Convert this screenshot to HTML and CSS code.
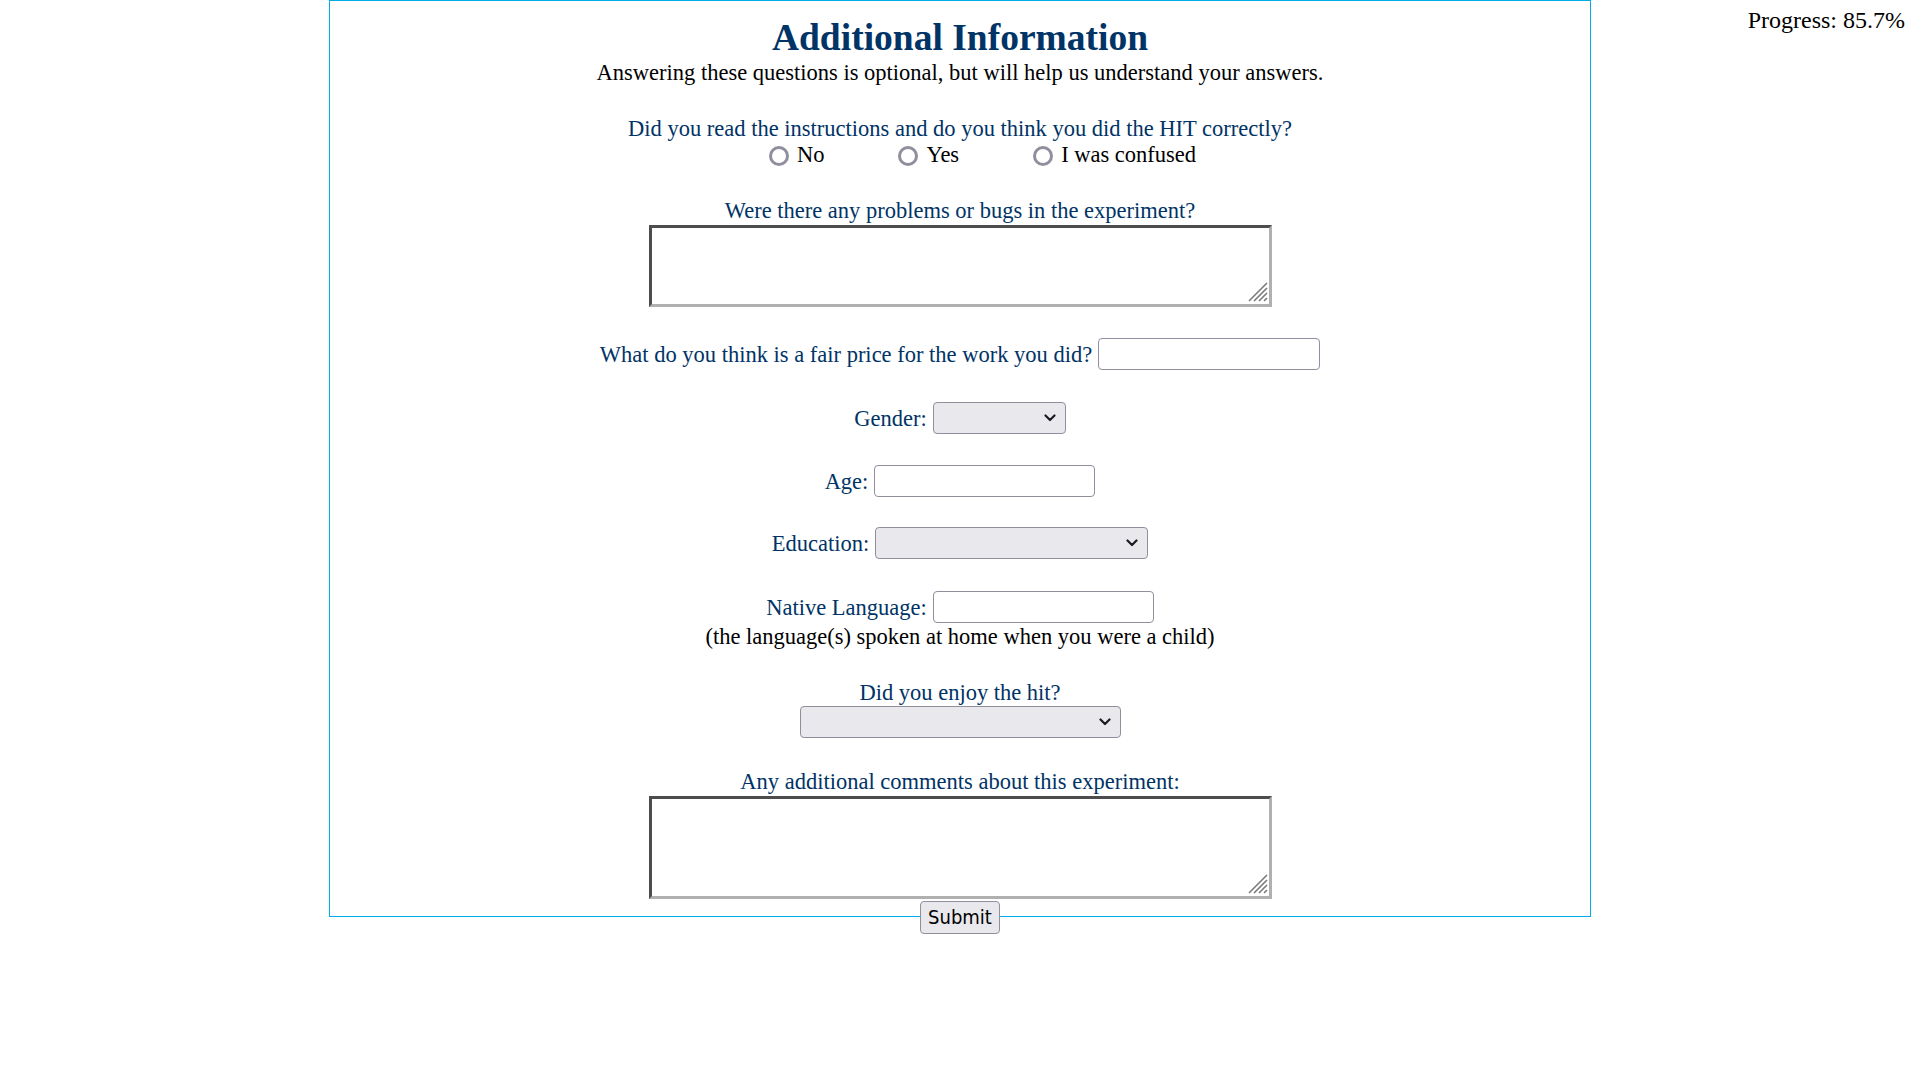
FILE: index.html
```html
<!DOCTYPE html>
<html lang="en">
<head>
<meta charset="utf-8">
<title>Additional Information</title>
<link rel="stylesheet" href="styles.css">
</head>
<body>
<div class="progress">Progress: 85.7%</div>
<form class="panel">
  <h1 class="title">Additional Information</h1>
  <p class="intro">Answering these questions is optional, but will help us understand your answers.</p>

  <p class="q q-first">Did you read the instructions and do you think you did the HIT correctly?</p>
  <div class="options">
    <label class="opt"><input class="radio" type="radio" name="correct" value="no"><span>No</span></label>
    <label class="opt"><input class="radio" type="radio" name="correct" value="yes"><span>Yes</span></label>
    <label class="opt"><input class="radio" type="radio" name="correct" value="confused"><span>I was confused</span></label>
  </div>

  <p class="q q-bugs">Were there any problems or bugs in the experiment?</p>
  <div class="area area-short">
    <textarea class="textarea" name="bugs"></textarea>
    <svg class="grip" width="20" height="20" viewBox="0 0 20 20"><path d="M1 19L19 1M6 19L19 6M11 19L19 11M16 19L19 16"/></svg>
  </div>

  <div class="field f-price">
    <label class="label">What do you think is a fair price for the work you did?</label>
    <input class="text" type="text" name="price">
  </div>

  <div class="field f-gender">
    <label class="label">Gender:</label>
    <span class="sel sel-gender">
      <select class="select" name="gender"><option></option></select>
      <svg class="chev" width="12" height="8" viewBox="0 0 12 8"><path d="M1.5 1.5L6 6L10.5 1.5"/></svg>
    </span>
  </div>

  <div class="field f-age">
    <label class="label">Age:</label>
    <input class="text" type="text" name="age">
  </div>

  <div class="field f-edu">
    <label class="label">Education:</label>
    <span class="sel sel-edu">
      <select class="select" name="education"><option></option></select>
      <svg class="chev" width="12" height="8" viewBox="0 0 12 8"><path d="M1.5 1.5L6 6L10.5 1.5"/></svg>
    </span>
  </div>

  <div class="field f-lang">
    <label class="label">Native Language:</label>
    <input class="text" type="text" name="language">
  </div>
  <p class="note">(the language(s) spoken at home when you were a child)</p>

  <p class="q q-enjoy">Did you enjoy the hit?</p>
  <span class="sel sel-enjoy">
    <select class="select" name="enjoy"><option></option></select>
    <svg class="chev" width="12" height="8" viewBox="0 0 12 8"><path d="M1.5 1.5L6 6L10.5 1.5"/></svg>
  </span>

  <p class="q q-comments">Any additional comments about this experiment:</p>
  <div class="area area-tall">
    <textarea class="textarea" name="comments"></textarea>
    <svg class="grip" width="20" height="20" viewBox="0 0 20 20"><path d="M1 19L19 1M6 19L19 6M11 19L19 11M16 19L19 16"/></svg>
  </div>

  <div class="actions">
    <button class="submit" type="button">Submit</button>
  </div>
</form>
</body>
</html>
```

FILE: styles.css
```css
html, body {
  margin: 0;
  padding: 0;
  background: #ffffff;
}

body {
  min-height: 100vh;
  font-family: "Liberation Serif", "Times New Roman", serif;
  color: #000000;
}

.progress {
  position: absolute;
  top: 6px;
  right: 15px;
  font-size: 24px;
  line-height: 28px;
}

.panel {
  width: 1260px;
  margin: 0 auto;
  border: 1px solid #00ade6;
  text-align: center;
}

.title {
  margin: 15px 0 0;
  font-size: 37.5px;
  line-height: 44px;
  font-weight: bold;
  color: #003366;
}

.intro,
.q,
.note {
  margin: 0;
  font-size: 22.5px;
  line-height: 26px;
}

.q {
  color: #003366;
}

.q-first { margin-top: 30px; }
.q-bugs { margin-top: 30px; }
.note { margin-top: 1px; }
.q-enjoy { margin-top: 30px; }
.q-comments { margin-top: 31px; }

.options {
  display: flex;
  justify-content: center;
  align-items: center;
  gap: 74px;
  height: 26px;
  padding-left: 45px;
  font-size: 22.5px;
  line-height: 26px;
}

.opt {
  display: flex;
  align-items: center;
  gap: 8px;
}

.radio {
  appearance: none;
  -webkit-appearance: none;
  box-sizing: border-box;
  width: 20px;
  height: 20px;
  margin: 2px 0 0;
  border: 3px solid #8f8f9d;
  border-radius: 50%;
  background: #ffffff;
}

.area {
  position: relative;
  width: 623px;
  margin: 1px auto 0;
}

.area-short { height: 82px; }
.area-tall { height: 103px; margin-top: 1.5px; }

.textarea {
  display: block;
  box-sizing: border-box;
  width: 100%;
  height: 100%;
  margin: 0;
  padding: 2px;
  border-width: 3px;
  border-style: solid;
  border-color: #4d4d4d #b0b0b0 #b0b0b0 #4d4d4d;
  background: #ffffff;
  resize: none;
  font-family: "Liberation Mono", monospace;
}

.grip {
  position: absolute;
  right: 4px;
  bottom: 5px;
  pointer-events: none;
  fill: none;
  stroke: #7a7a7a;
  stroke-width: 1.6;
}

.field {
  display: flex;
  justify-content: center;
  align-items: flex-start;
  gap: 6px;
  height: 32px;
}

.f-price { margin-top: 31px; }
.f-gender { margin-top: 32px; }
.f-age { margin-top: 31px; }
.f-edu { margin-top: 30px; }
.f-lang { margin-top: 32px; }

.label {
  margin-top: 3.5px;
  font-size: 22.5px;
  line-height: 26px;
  color: #003366;
}

.text {
  box-sizing: border-box;
  width: 221px;
  height: 32px;
  margin: 0;
  padding: 0 4px;
  border: 1px solid #8f8f9d;
  border-radius: 4px;
  background: #ffffff;
  font-family: "DejaVu Sans", sans-serif;
  font-size: 18px;
}

.f-price .text { width: 222px; }

.sel {
  position: relative;
  display: inline-block;
  height: 32px;
}

.sel-gender { width: 133px; }
.sel-edu { width: 273px; }
.sel-enjoy {
  display: block;
  width: 321px;
  margin: -0.5px auto 0;
}

.select {
  appearance: none;
  -webkit-appearance: none;
  box-sizing: border-box;
  display: block;
  width: 100%;
  height: 32px;
  margin: 0;
  padding: 0 30px 0 8px;
  border: 1px solid #8f8f9d;
  border-radius: 4px;
  background: #e9e9ed;
  font-family: "DejaVu Sans", sans-serif;
  font-size: 18px;
  color: #000000;
}

.chev {
  position: absolute;
  right: 10px;
  top: 12px;
  pointer-events: none;
  fill: none;
  stroke: #1c1b22;
  stroke-width: 2.2;
  stroke-linecap: round;
  stroke-linejoin: round;
}

.actions {
  display: flex;
  justify-content: center;
  height: 33px;
  margin: 2px 0 -18px;
}

.submit {
  box-sizing: border-box;
  width: 80px;
  height: 33px;
  margin: 0;
  padding: 0;
  border: 1px solid #8f8f9d;
  border-radius: 4px;
  background: #e9e9ed;
  color: #000000;
  font-family: "DejaVu Sans Condensed", "DejaVu Sans", sans-serif;
  font-stretch: condensed;
  font-size: 20px;
  line-height: 31px;
}
```
